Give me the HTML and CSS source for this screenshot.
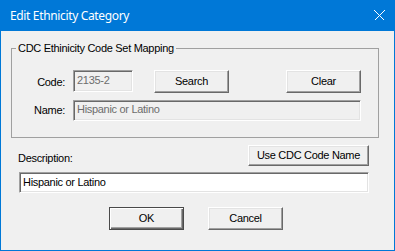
FILE: index.html
```html
<!DOCTYPE html>
<html lang="en">
<head>
  <meta charset="UTF-8" />
  <title>Edit Ethnicity Category</title>
  <link rel="stylesheet" href="styles.css">
</head>
<body>
  <div class="window">
    <div class="titlebar">
      <span class="title">Edit Ethnicity Category</span>
      <svg class="close" width="11" height="11" viewBox="0 0 11 11">
        <path d="M0.5 0.5 L10.5 10.5 M10.5 0.5 L0.5 10.5" stroke="#fff" stroke-width="1" />
      </svg>
    </div>

    <div class="content">
      <!-- CDC mapping group -->
      <fieldset class="group">
        <legend>CDC Ethinicity Code Set Mapping</legend>
        <div class="row">
          <label class="field-label code-label">Code:</label>
          <input class="textbox disabled code" type="text" value="2135-2" disabled />
          <button class="btn search">Search</button>
          <button class="btn clear">Clear</button>
        </div>
        <div class="row name-row">
          <label class="field-label name-label">Name:</label>
          <input class="textbox disabled name" type="text" value="Hispanic or Latino" disabled />
        </div>
      </fieldset>

      <div class="desc-head">
        <label class="desc-label">Description:</label>
        <button class="btn use-cdc">Use CDC Code Name</button>
      </div>
      <input class="textbox desc" type="text" value="Hispanic or Latino" />

      <div class="actions">
        <button class="btn default">OK</button>
        <button class="btn">Cancel</button>
      </div>
    </div>
  </div>
</body>
</html>
```

FILE: styles.css
```css
* {
  box-sizing: border-box;
}

body {
  margin: 0;
  font-family: "Liberation Sans", Arial, sans-serif;
  font-size: 11px;
  letter-spacing: -0.3px;
  color: #000;
  background: #f0f0f0;
}

.window {
  width: 395px;
  height: 251px;
  border: 1px solid #0078d7;
  border-top: 0;
  background: #f0f0f0;
}

.titlebar {
  height: 31px;
  background: #0078d7;
  color: #fff;
  display: flex;
  align-items: center;
  justify-content: space-between;
  padding: 0 9px 0 9px;
  font-family: "Noto Sans", sans-serif;
  font-size: 12px;
  letter-spacing: -0.35px;
}

.close {
  display: block;
  shape-rendering: crispEdges;
}

.content {
  padding: 11px 15px 0 10px;
}

.group {
  margin: 0;
  padding: 15px 0 16px 0;
  border: 1px solid #a0a0a0;
  min-width: 0;
}

.group legend {
  margin-left: 4px;
  padding: 0 2px;
  line-height: 13px;
}

.row {
  display: flex;
  align-items: flex-start;
}

.field-label {
  width: 53px;
  text-align: right;
}

.code-label {
  line-height: 22px;
  padding-top: 1px;
}

.name-label {
  line-height: 21px;
}

.name-row {
  margin-top: 7px;
}

/* sunken text boxes */
.textbox {
  font: inherit;
  letter-spacing: inherit;
  line-height: 13px;
  color: #000;
  background: #fff;
  border: 1px solid;
  border-color: #a0a0a0 #fff #fff #a0a0a0;
  box-shadow: inset 1px 1px #696969, inset -1px -1px #e3e3e3;
  padding: 1px 3px 5px;
  outline: none;
  margin: 0;
}

.textbox.disabled {
  background: #f0f0f0;
  color: #6d6d6d;
}

.code {
  margin-left: 8px;
  width: 60px;
  height: 22px;
  padding-top: 2px;
  padding-bottom: 5px;
}

.name {
  margin-left: 8px;
  width: 288px;
  height: 21px;
}

/* raised buttons */
.btn {
  font: inherit;
  letter-spacing: inherit;
  color: #000;
  width: 75px;
  height: 23px;
  margin: 0;
  padding: 0 0 1px;
  background: #f0f0f0;
  border: 1px solid;
  border-color: #fff #696969 #696969 #fff;
  box-shadow: inset -1px -1px #a0a0a0, inset 1px 1px #e3e3e3;
}

.btn.default {
  border-color: #4a4a4a;
  box-shadow: inset 1px 1px #fff, inset -1px -1px #696969, inset -2px -2px #a0a0a0;
}

.search {
  margin-left: 21px;
}

.clear {
  margin-left: 57px;
}

.desc-head {
  display: flex;
  justify-content: space-between;
  align-items: flex-end;
  margin: 7px 10px 0 7px;
}

.desc-label {
  line-height: 13px;
  padding-bottom: 1px;
}

.use-cdc {
  width: 121px;
  height: 21px;
}

.desc {
  display: block;
  margin: 6px 0 0 8px;
  width: 350px;
  height: 21px;
  padding-top: 2px;
  padding-bottom: 4px;
}

.actions {
  display: flex;
  gap: 24px;
  margin: 14px 0 0 98px;
}
```
